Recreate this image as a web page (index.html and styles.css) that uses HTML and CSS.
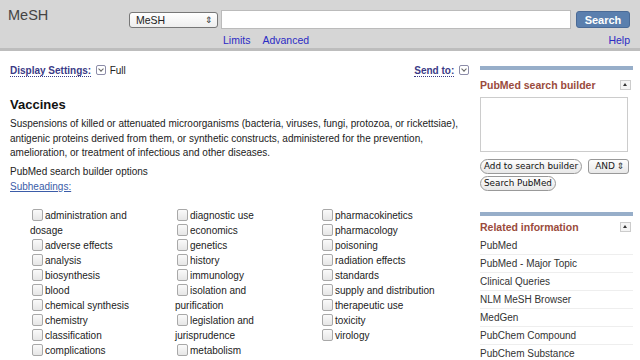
FILE: index.html
```html
<!DOCTYPE html>
<html lang="en">
<head>
  <meta charset="UTF-8" />
  <title>MeSH - Vaccines</title>
  <link rel="stylesheet" href="styles.css">
</head>
<body>
  <div class="header">
    <div class="brand">MeSH</div>
    <div class="search-area">
      <div class="search-row">
        <div class="db-select">MeSH <span class="arrows">&#8661;</span></div>
        <input type="text" class="search-input" />
        <button class="search-button">Search</button>
      </div>
      <div class="search-links">
        <a href="#">Limits</a>
        <a href="#">Advanced</a>
        <a href="#" class="help">Help</a>
      </div>
    </div>
  </div>

  <div class="page">
    <div class="main">
      <div class="display-bar">
        <div><a href="#" class="dotted">Display Settings:</a> <span class="drop-icon"></span> Full</div>
        <div><a href="#" class="dotted">Send to:</a> <span class="drop-icon"></span></div>
      </div>

      <h1>Vaccines</h1>
      <p class="desc">Suspensions of killed or attenuated microorganisms (bacteria, viruses, fungi, protozoa, or rickettsiae), antigenic proteins derived from them, or synthetic constructs, administered for the prevention, amelioration, or treatment of infectious and other diseases.</p>

      <div class="builder-opts">PubMed search builder options</div>
      <a href="#" class="subheadings">Subheadings:</a>

      <div class="subhead-grid">
        <div class="subhead-col">
          <label><span class="box"></span>administration and dosage</label>
          <label><span class="box"></span>adverse effects</label>
          <label><span class="box"></span>analysis</label>
          <label><span class="box"></span>biosynthesis</label>
          <label><span class="box"></span>blood</label>
          <label><span class="box"></span>chemical synthesis</label>
          <label><span class="box"></span>chemistry</label>
          <label><span class="box"></span>classification</label>
          <label><span class="box"></span>complications</label>
        </div>
        <div class="subhead-col">
          <label><span class="box"></span>diagnostic use</label>
          <label><span class="box"></span>economics</label>
          <label><span class="box"></span>genetics</label>
          <label><span class="box"></span>history</label>
          <label><span class="box"></span>immunology</label>
          <label><span class="box"></span>isolation and purification</label>
          <label><span class="box"></span>legislation and jurisprudence</label>
          <label><span class="box"></span>metabolism</label>
        </div>
        <div class="subhead-col">
          <label><span class="box"></span>pharmacokinetics</label>
          <label><span class="box"></span>pharmacology</label>
          <label><span class="box"></span>poisoning</label>
          <label><span class="box"></span>radiation effects</label>
          <label><span class="box"></span>standards</label>
          <label><span class="box"></span>supply and distribution</label>
          <label><span class="box"></span>therapeutic use</label>
          <label><span class="box"></span>toxicity</label>
          <label><span class="box"></span>virology</label>
        </div>
      </div>
    </div>

    <div class="sidebar">
      <div class="portlet">
        <div class="portlet-head">
          <span>PubMed search builder</span>
          <span class="collapse"></span>
        </div>
        <div class="builder-box"></div>
        <div class="builder-actions">
          <button class="pill">Add to search builder</button>
          <div class="and-select">AND <span class="arrows">&#8661;</span></div>
          <button class="pill">Search PubMed</button>
        </div>
      </div>

      <div class="portlet related">
        <div class="portlet-head">
          <span>Related information</span>
          <span class="collapse"></span>
        </div>
        <ul class="related-list">
          <li>PubMed</li>
          <li>PubMed - Major Topic</li>
          <li>Clinical Queries</li>
          <li>NLM MeSH Browser</li>
          <li>MedGen</li>
          <li>PubChem Compound</li>
          <li>PubChem Substance</li>
        </ul>
      </div>
    </div>
  </div>
</body>
</html>
```

FILE: styles.css
```css
body {
  margin: 0;
  font-family: "Liberation Sans", Arial, sans-serif;
  font-size: 10px;
  color: #222;
  background: #fff;
  overflow: hidden;
}
a {
  color: #2b2bc4;
  text-decoration: none;
}
.header {
  display: flex;
  background: #d6d6d6;
  height: 48px;
  border-bottom: 3px solid #bdbdbd;
}
.brand {
  width: 130px;
  padding: 7px 0 0 8px;
  box-sizing: border-box;
  font-size: 14.5px;
  color: #444;
}
.search-area {
  flex: 1;
  padding: 10px 10px 0 0;
}
.search-row {
  display: flex;
  align-items: center;
  gap: 4px;
}
.db-select {
  width: 89px;
  height: 16px;
  box-sizing: border-box;
  border: 1px solid #777;
  border-radius: 3px;
  background: linear-gradient(#fff, #eee);
  font-size: 10.5px;
  padding-left: 6px;
  line-height: 14px;
  color: #222;
  display: flex;
  justify-content: space-between;
}
.arrows {
  font-size: 9px;
  padding-right: 4px;
  color: #333;
}
.search-input {
  width: 350px;
  height: 19px;
  box-sizing: border-box;
  border: 1px solid #bbb;
  margin: 0 0 0 -1px;
  background: #fff;
}
.search-button {
  margin-left: 1px;
  width: 54px;
  height: 17px;
  padding: 0;
  border: 1px solid #4a6a96;
  border-radius: 3px;
  background: #5a7fae;
  color: #fff;
  font-family: "Liberation Sans", Arial, sans-serif;
  font-weight: bold;
  font-size: 11px;
}
.search-links {
  display: flex;
  gap: 12px;
  padding: 5px 0 0 94px;
  font-size: 10.5px;
}
.search-links .help {
  margin-left: auto;
}
.page {
  display: flex;
  padding: 14px 7px 0 10px;
}
.main {
  width: 450px;
}
.display-bar {
  display: flex;
  justify-content: space-between;
  align-items: center;
  margin-right: -10px;
}
.dotted {
  color: #3a3a86;
  font-weight: bold;
  border-bottom: 1px dotted #3a3a86;
}
.drop-icon {
  display: inline-block;
  width: 8px;
  height: 8px;
  border: 1px solid #8c8ca8;
  border-radius: 2px;
  vertical-align: -1px;
  margin: 0 1px 0 2px;
  position: relative;
}
.drop-icon::after {
  content: "";
  position: absolute;
  left: 2px;
  top: 1px;
  width: 3px;
  height: 3px;
  border-right: 1px solid #666;
  border-bottom: 1px solid #666;
  transform: rotate(45deg);
}
h1 {
  font-size: 13px;
  margin: 21px 0 5px;
  color: #111;
}
.desc {
  margin: 0 0 3px;
  line-height: 14.5px;
}
.builder-opts {
  line-height: 15px;
}
.subheadings {
  color: #3b5ca8;
  text-decoration: underline;
  line-height: 15px;
}
.subhead-grid {
  display: grid;
  grid-template-columns: 145px 145px 145px;
  padding: 14px 0 0 20px;
}
.subhead-col label {
  display: block;
  max-width: 118px;
  line-height: 15px;
  color: #222;
}
.box {
  display: inline-block;
  width: 9px;
  height: 10px;
  border: 1px solid #a8a8a8;
  border-radius: 2px;
  background: linear-gradient(#fafafa, #e6e6e6);
  vertical-align: -2px;
  margin: 0 2px 0 2px;
}
.sidebar {
  width: 153px;
  margin-left: 20px;
}
.portlet {
  border-top: 4px solid #97aec9;
  margin-top: 1px;
}
.portlet-head {
  display: flex;
  justify-content: space-between;
  align-items: center;
  padding: 9px 0 4px;
  color: #9a4b3c;
  font-weight: bold;
  font-size: 10.5px;
}
.collapse {
  width: 9px;
  height: 8px;
  border: 1px solid #ccc;
  background: #f4f4f4;
  position: relative;
  margin-right: 2px;
}
.collapse::after {
  content: "";
  position: absolute;
  left: 2px;
  top: 2px;
  border-left: 2px solid transparent;
  border-right: 2px solid transparent;
  border-bottom: 3px solid #333;
}
.builder-box {
  width: 148px;
  height: 55px;
  box-sizing: border-box;
  border: 1px solid #ccc;
  margin-top: 2px;
}
.builder-actions {
  display: flex;
  flex-wrap: wrap;
  gap: 2px 6px;
  padding-top: 7px;
}
.pill {
  height: 15px;
  padding: 0 3px;
  border: 1px solid #999;
  border-radius: 8px;
  background: linear-gradient(#fdfdfd, #e8e8e8);
  font-family: "DejaVu Sans", sans-serif;
  font-size: 8.8px;
  color: #111;
  line-height: 13px;
}
.and-select {
  width: 41px;
  height: 15px;
  box-sizing: border-box;
  border: 1px solid #999;
  border-radius: 3px;
  background: linear-gradient(#fdfdfd, #e8e8e8);
  font-family: "DejaVu Sans", sans-serif;
  font-size: 9px;
  line-height: 13px;
  padding-left: 6px;
  display: flex;
  justify-content: space-between;
}
.related {
  margin-top: 21px;
}
.related .portlet-head {
  padding-top: 5px;
}
.related-list {
  list-style: none;
  margin: 0;
  padding: 0;
}
.related-list li {
  line-height: 17px;
  border-bottom: 1px solid #eee;
  color: #333;
}
```
